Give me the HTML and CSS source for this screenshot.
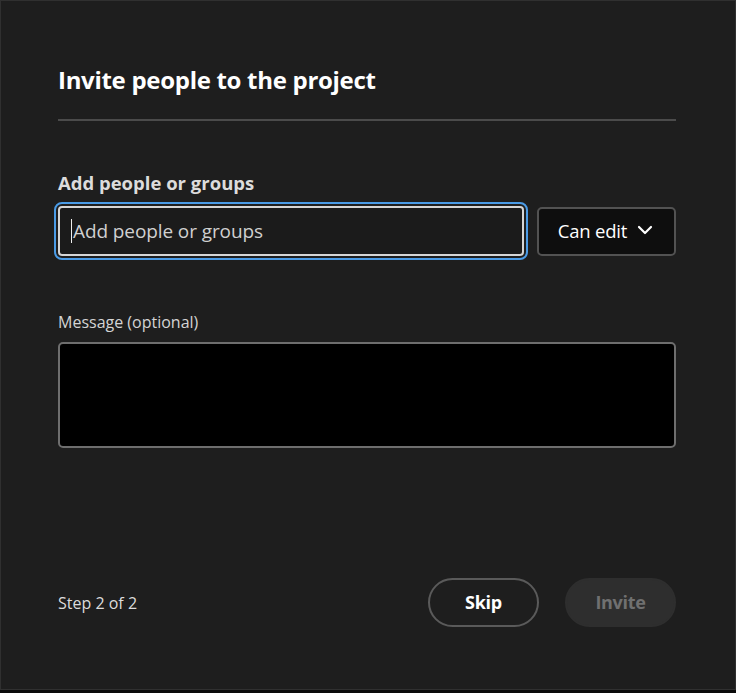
FILE: index.html
```html
<!DOCTYPE html>
<html>
<head>
<meta charset="utf-8">
<link rel="stylesheet" href="styles.css">
</head>
<body>
<div class="dialog">
  <h1 class="title">Invite people to the project</h1>
  <div class="divider"></div>
  <div class="field">
    <label class="label-strong">Add people or groups</label>
    <div class="row">
      <div class="input-ring">
        <div class="input"><span class="caret"></span><span class="placeholder">Add people or groups</span></div>
      </div>
      <button class="picker">Can edit
        <svg width="16" height="10" viewBox="0 0 16 10"><path d="M2 2 L8 8 L14 2" fill="none" stroke="#fff" stroke-width="2.2" stroke-linecap="round" stroke-linejoin="round"/></svg>
      </button>
    </div>
  </div>
  <div class="field message">
    <label class="label">Message (optional)</label>
    <div class="textarea"></div>
  </div>
  <div class="footer">
    <span class="step">Step 2 of 2</span>
    <div class="buttons">
      <button class="btn btn-skip">Skip</button>
      <button class="btn btn-invite">Invite</button>
    </div>
  </div>
</div>
</body>
</html>
```
FILE: styles.css
```css
* { box-sizing: border-box; }
html, body { margin: 0; padding: 0; background: #0a0a0a; }
body { font-family: "Open Sans", "Noto Sans", sans-serif; }
.dialog {
  width: 736px;
  height: 690px;
  background: #1e1e1e;
  border: 1px solid #303030;
  padding: 62px 59px 0 57px;
  display: flex;
  flex-direction: column;
}
.title {
  margin: 0;
  font-size: 24px;
  line-height: 34px;
  font-weight: 700;
  color: #ffffff;
  letter-spacing: -0.3px;
}
.divider {
  height: 2px;
  background: #4b4b4b;
  margin-top: 22px;
}
.field { display: flex; flex-direction: column; }
.label-strong {
  margin-top: 50px;
  font-size: 18.5px;
  line-height: 24px;
  font-weight: 700;
  color: #dcdcdc;
  letter-spacing: 0;
}
.row { display: flex; gap: 9px; margin-top: 7px; align-items: center; }
.input-ring {
  flex: 1;
  margin-left: -4px;
  margin-right: -4px;
  border: 2px solid #4a9be6;
  border-radius: 8px;
  padding: 2px;
}
.input {
  height: 50px;
  border: 2px solid #d6d6d6;
  border-radius: 4px;
  background: #1b1b1b;
  display: flex;
  align-items: center;
  padding-left: 11px;
}
.caret { width: 1px; height: 24px; background: #eee; margin-right: 1px; }
.placeholder { font-size: 19px; color: #d0d0d0; letter-spacing: -0.1px; }
.picker {
  height: 49px;
  width: 139px;
  margin-left: 4px;
  background: #0e0e0e;
  border: 2px solid #525252;
  border-radius: 5px;
  color: #fff;
  font-family: inherit;
  font-size: 18.5px;
  font-weight: 500;
  letter-spacing: -0.2px;
  display: flex;
  align-items: center;
  justify-content: center;
  gap: 10px;
  padding: 0 2px 2px 0;
}
.message .label {
  margin-top: 51px;
  font-size: 16px;
  line-height: 22px;
  color: #d4d4d4;
  letter-spacing: 0;
}
.textarea {
  margin-top: 9px;
  height: 106px;
  background: #000;
  border: 2px solid #6e6e6e;
  border-radius: 5px;
}
.footer {
  margin-top: auto;
  margin-bottom: 62px;
  display: flex;
  align-items: center;
  justify-content: space-between;
}
.step { font-size: 16px; color: #dcdcdc; letter-spacing: 0; }
.buttons { display: flex; gap: 26px; }
.btn {
  height: 49px;
  width: 111px;
  border-radius: 25px;
  font-family: inherit;
  font-size: 18px;
  font-weight: 700;
  letter-spacing: -0.3px;
  padding: 0 0 2px;
}
.btn-skip { background: transparent; border: 2px solid #5a5a5a; color: #fff; }
.btn-invite { background: #2e2e2e; border: 2px solid #2e2e2e; color: #707070; }
```
